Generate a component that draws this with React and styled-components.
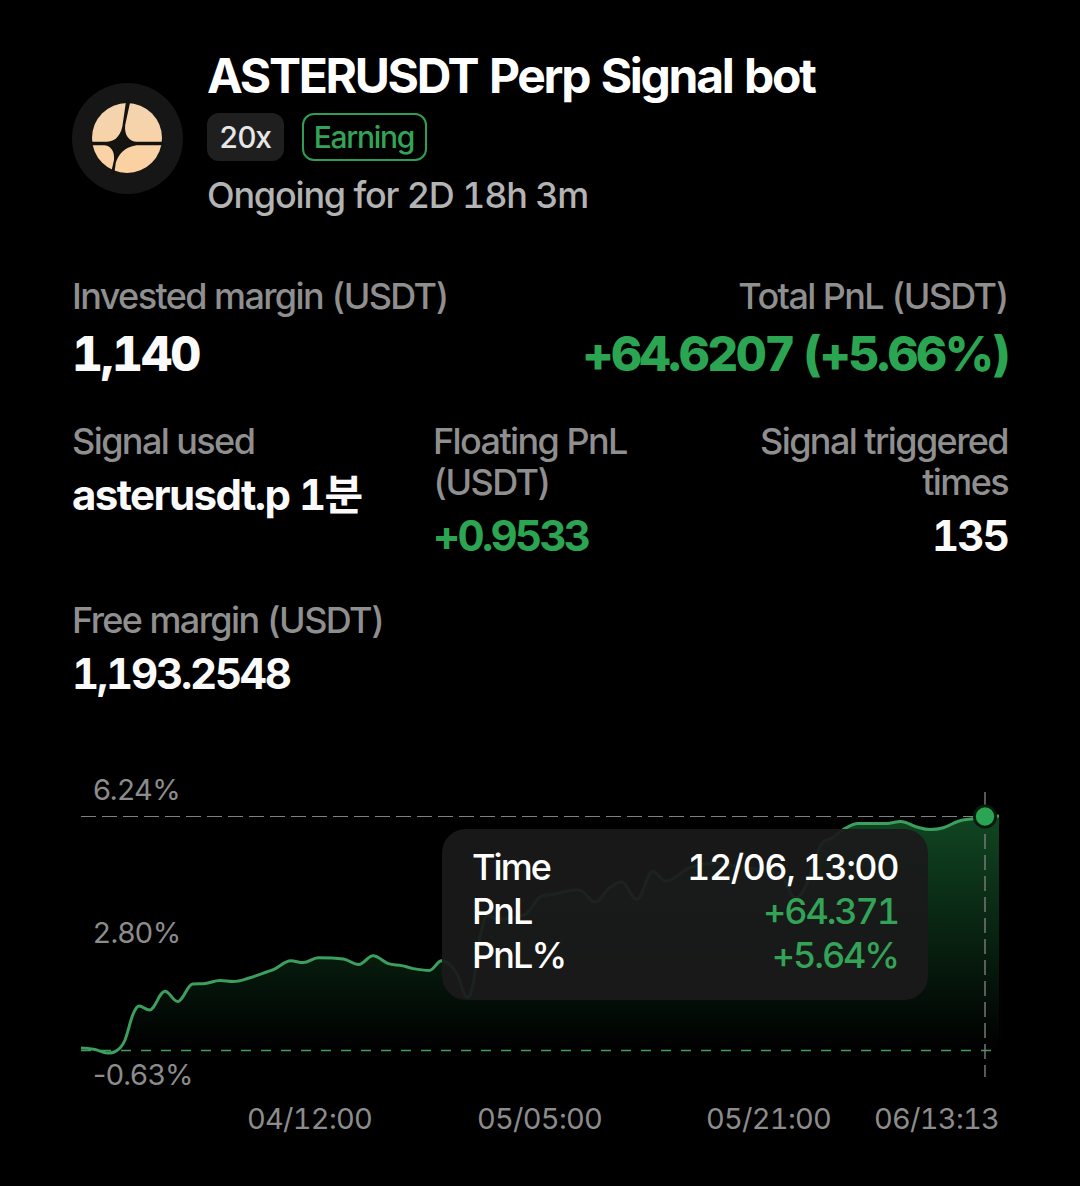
import React from 'react';
import styled, { createGlobalStyle } from 'styled-components';

const GlobalStyle = createGlobalStyle`
  body {
    margin: 0;
    background: #000;
  }
`;

const Page = styled.div`
  box-sizing: border-box;
  width: 1080px;
  height: 1186px;
  padding: 48px 72px 0;
  overflow: hidden;
  background: #000;
  color: #fafafa;
  font-family: Inter, 'Noto Sans CJK KR', sans-serif;
  font-variant-numeric: tabular-nums;
`;

const Header = styled.header`
  display: flex;
  gap: 24px;
`;

const Avatar = styled.svg`
  flex: none;
  width: 111px;
  height: 111px;
  margin-top: 35px;
`;

const Heading = styled.div`
  display: flex;
  flex-direction: column;
`;

const Title = styled.h1`
  margin: 0;
  color: #fff;
  font-size: 48px;
  font-weight: 700;
  line-height: 56px;
  letter-spacing: -2.3px;
  word-spacing: 1px;
  white-space: nowrap;
`;

const Tags = styled.div`
  display: flex;
  gap: 18px;
  margin-top: 9px;
`;

const Tag = styled.span`
  box-sizing: border-box;
  height: 48px;
  padding: 0 ${props => (props.$outlined ? 11 : 13)}px 0 ${props => (props.$outlined ? 10 : 12)}px;
  border: ${props => (props.$outlined ? '2px solid #2f9e54' : 'none')};
  border-radius: 12px;
  background: ${props => (props.$outlined ? 'transparent' : '#1f1f1f')};
  color: ${props => (props.$outlined ? '#33a457' : '#e6e6e6')};
  font-size: 30px;
  font-weight: 500;
  line-height: ${props => (props.$outlined ? 44 : 48)}px;
  letter-spacing: -1.3px;
`;

const Duration = styled.div`
  margin-top: 12px;
  color: #b3b3b3;
  font-size: 36px;
  font-weight: 500;
  line-height: 44px;
  letter-spacing: -1.2px;
`;

const Stats = styled.div`
  display: flex;
  justify-content: space-between;
  margin-top: ${props => props.$top}px;
`;

const Stat = styled.div`
  width: ${props => props.$width || 'auto'};
  text-align: ${props => props.$align || 'left'};
`;

const Label = styled.div`
  color: #8f8f8f;
  font-size: 36px;
  font-weight: 500;
  line-height: 41px;
  letter-spacing: -1.6px;
`;

const Value = styled.div`
  margin-top: ${props => (props.$large ? 9 : 7)}px;
  margin-bottom: ${props => (props.$large ? 0 : -1)}px;
  color: ${props => (props.$up ? '#2ca552' : '#fafafa')};
  font-size: ${props => (props.$large ? 48 : 42)}px;
  font-weight: ${props => (props.$large ? 800 : 700)};
  line-height: ${props => (props.$large ? 56 : 52)}px;
  letter-spacing: ${props => props.$tracking || -2.2}px;
  white-space: nowrap;
`;

const Chart = styled.section`
  position: relative;
  width: 918px;
  height: 366px;
  margin: 79px 0 0 9px;
`;

const Plot = styled.svg`
  display: block;
  width: 918px;
  height: 300px;
`;

const AxisLabel = styled.span`
  position: absolute;
  left: 12px;
  top: ${props => props.$top}px;
  color: #8c8c8c;
  font-size: 29px;
  font-variant-numeric: normal;
  line-height: 36px;
  letter-spacing: -0.5px;
`;

const TimeAxis = styled.div`
  display: flex;
  margin-top: 23px;
  padding-left: 166px;
  color: #8c8c8c;
  font-size: 29px;
  line-height: 36px;
  letter-spacing: -0.75px;
`;

const Tick = styled.span`
  width: ${props => props.$width}px;
  flex: none;
`;

const Tooltip = styled.div`
  position: absolute;
  left: 361px;
  top: 51px;
  box-sizing: border-box;
  width: 486px;
  height: 171px;
  padding: 16px 30px 0;
  border-radius: 24px;
  background: rgba(26, 26, 26, 0.93);
`;

const TooltipRow = styled.div`
  display: flex;
  justify-content: space-between;
  color: #fff;
  font-size: 36px;
  font-weight: 500;
  line-height: 44px;
  letter-spacing: -1.9px;
`;

const Amount = styled.span`
  color: ${props => (props.$up ? '#33a457' : '#fff')};
  letter-spacing: ${props => (props.$up ? -2.1 : -1.5)}px;
`;

const points = [
  [0, 270], [14, 271.5], [26.3, 275], [39, 270], [44, 262], [52.3, 235.5], [58, 228], [68.5, 232],
  [84, 213.3], [96.7, 223.5], [111.7, 206], [124, 205.5], [139, 202.5], [152.3, 203.5], [167.3, 200.3],
  [185.7, 194], [194, 190.8], [209.7, 182.8], [222.3, 184.6], [237.3, 179.8], [262.3, 181], [277.7, 186.4],
  [292, 177.8], [307.3, 185.6], [320.7, 187.6], [332.3, 190.6], [348.3, 192.4], [360.7, 182.8],
  [375.7, 195.3], [386.3, 219.5], [392.3, 205], [399, 159], [407, 137.5], [417.3, 141], [444, 136.3],
  [460.7, 118], [472.3, 116.3], [495.7, 111.8], [502, 113.8], [514, 124.3], [527.3, 111], [540.7, 104],
  [555.7, 121.5], [571.7, 93.5], [584.7, 103], [609, 89.5], [635.7, 85], [665, 90], [690, 93], [702, 99.5],
  [714, 120], [724, 110], [740.7, 65.5], [750.7, 60.3], [763, 51], [777.3, 45.6], [805.7, 45.4],
  [819.7, 43.6], [835.7, 49], [849, 51.6], [862.3, 49.8], [877.3, 43.2], [892, 40.8], [904, 39.3], [918, 38]
];

// Flat handles at peaks, averaged (and clamped) slope elsewhere, so the curve never overshoots.
const buildLine = pts => {
  const slopes = pts.map((p, i) => {
    if (i === 0 || i === pts.length - 1) return 0;
    const a = (p[1] - pts[i - 1][1]) / (p[0] - pts[i - 1][0]);
    const b = (pts[i + 1][1] - p[1]) / (pts[i + 1][0] - p[0]);
    if (a * b <= 0) return 0;
    return Math.sign(a) * Math.min(Math.abs(a + b) / 2, 2.5 * Math.abs(a), 2.5 * Math.abs(b));
  });
  return pts.slice(1).reduce((d, p, i) => {
    const q = pts[i];
    const h = (p[0] - q[0]) * 0.37;
    return `${d} C${q[0] + h},${q[1] + slopes[i] * h} ${p[0] - h},${p[1] - slopes[i + 1] * h} ${p[0]},${p[1]}`;
  }, `M${pts[0][0]},${pts[0][1]}`);
};

const line = buildLine(points);

const tooltipRows = [
  { name: 'Time', value: '12/06, 13:00' },
  { name: 'PnL', value: '+64.371', up: true },
  { name: 'PnL%', value: '+5.64%', up: true }
];

const ticks = [
  { text: '04/12:00', width: 230 },
  { text: '05/05:00', width: 229 },
  { text: '05/21:00', width: 168 },
  { text: '06/13:13', width: 130 }
];

const CoinLogo = () => (
  <Avatar viewBox="0 0 111 111">
    <defs>
      <linearGradient id="coin" x1="0" y1="0" x2="0" y2="1">
        <stop offset="0" stopColor="#f3d5b1" />
        <stop offset="1" stopColor="#fdd1a0" />
      </linearGradient>
    </defs>
    <circle cx="55.5" cy="55.5" r="55.5" fill="#161616" />
    <circle cx="55" cy="55" r="35" fill="url(#coin)" />
    <path
      d="M54.2,17 H58.6 L53.2,42 C52,52 57,58.7 65,58.7 H92 V62.3 H67 C54,62.3 45,72 43.5,82 L42,92 H38.5 L42,77 C43,68 38,62.3 32,62.3 H19 V58.7 H35 C44,58.7 50,51 51,39 Z"
      fill="#14130f"
    />
  </Avatar>
);

const PnlChart = () => (
  <Chart>
    <Plot viewBox="0 0 918 300">
      <defs>
        <linearGradient id="area" gradientUnits="userSpaceOnUse" x1="0" y1="38" x2="0" y2="272">
          <stop offset="0" stopColor="#27a550" stopOpacity="0.42" />
          <stop offset="1" stopColor="#27a550" stopOpacity="0" />
        </linearGradient>
      </defs>
      <path d={`${line} V272 H0 Z`} fill="url(#area)" />
      <path d="M0,38.5 H918" stroke="#808080" strokeWidth="1.2" strokeDasharray="15 6" />
      <path d="M0,272.5 H912" stroke="#409e60" strokeWidth="1.5" strokeDasharray="10 10" />
      <path d={line} fill="none" stroke="#3c9f5e" strokeWidth="3" />
      <path d="M904,14 V299" stroke="#7a7a7a" strokeOpacity="0.8" strokeWidth="1.8" strokeDasharray="15 6" />
      <circle cx="904" cy="38.5" r="12" fill="#071a0d" />
      <circle cx="904" cy="38.5" r="9.2" fill="#2aa553" />
    </Plot>
    <AxisLabel $top={-6}>6.24%</AxisLabel>
    <AxisLabel $top={137}>2.80%</AxisLabel>
    <AxisLabel $top={279}>-0.63%</AxisLabel>
    <Tooltip>
      {tooltipRows.map(row => (
        <TooltipRow key={row.name}>
          <span>{row.name}</span>
          <Amount $up={row.up}>{row.value}</Amount>
        </TooltipRow>
      ))}
    </Tooltip>
    <TimeAxis>
      {ticks.map(tick => (
        <Tick key={tick.text} $width={tick.width}>
          {tick.text}
        </Tick>
      ))}
    </TimeAxis>
  </Chart>
);

const App = () => (
  <Page>
    <GlobalStyle />
    <Header>
      <CoinLogo />
      <Heading>
        <Title>ASTERUSDT Perp Signal bot</Title>
        <Tags>
          <Tag>20x</Tag>
          <Tag $outlined>Earning</Tag>
        </Tags>
        <Duration>Ongoing for 2D 18h 3m</Duration>
      </Heading>
    </Header>
    <Stats $top={59}>
      <Stat>
        <Label>Invested margin (USDT)</Label>
        <Value $large $tracking={-1.9}>
          1,140
        </Value>
      </Stat>
      <Stat $align="right">
        <Label>Total PnL (USDT)</Label>
        <Value $large $up $tracking={-2.4}>
          +64.6207 (+5.66%)
        </Value>
      </Stat>
    </Stats>
    <Stats $top={39}>
      <Stat $width="361px">
        <Label>Signal used</Label>
        <Value $tracking={-1.6}>asterusdt.p 1분</Value>
      </Stat>
      <Stat $width="240px">
        <Label>Floating PnL (USDT)</Label>
        <Value $up $tracking={-2.7}>
          +0.9533
        </Value>
      </Stat>
      <Stat $width="335px" $align="right">
        <Label>
          Signal triggered
          <br />
          times
        </Label>
        <Value $tracking={-1.8}>135</Value>
      </Stat>
    </Stats>
    <Stats $top={39}>
      <Stat>
        <Label>Free margin (USDT)</Label>
        <Value>1,193.2548</Value>
      </Stat>
    </Stats>
    <PnlChart />
  </Page>
);

export default App;
